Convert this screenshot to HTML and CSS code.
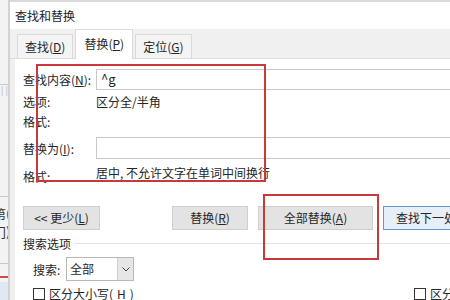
FILE: index.html
```html
<!DOCTYPE html>
<html lang="zh-CN">
<head>
  <meta charset="UTF-8" />
  <title>查找和替换</title>
  <link rel="stylesheet" href="styles.css">
</head>
<body>
  <div class="screen">
    <div class="backdrop">
      <div class="bd-rule bd-rule-top"></div>
      <div class="bd-ticks">| |</div>
      <div class="bd-rule bd-rule-mid"></div>
      <div class="bd-text bd-text-first">第(</div>
      <div class="bd-text">门)</div>
      <div class="bd-rule bd-rule-low"></div>
      <div class="bd-red"></div>
      <div class="bd-blue"></div>
    </div>

    <div class="dialog">
      <div class="titlebar">查找和替换</div>

      <div class="tabs">
        <div class="tab">查找(<u>D</u>)</div>
        <div class="tab active">替换(<u>P</u>)</div>
        <div class="tab">定位(<u>G</u>)</div>
      </div>

      <div class="panel">
        <div class="field-row find-row">
          <span class="label">查找内容(<u>N</u>):</span>
          <div class="input">^g</div>
        </div>
        <div class="info-row options-row">
          <span class="label">选项:</span>
          <span class="value">区分全/半角</span>
        </div>
        <div class="info-row">
          <span class="label">格式:</span>
        </div>
        <div class="field-row replace-row">
          <span class="label">替换为(<u>I</u>):</span>
          <div class="input"></div>
        </div>
        <div class="info-row format-row">
          <span class="label">格式:</span>
          <span class="value">居中, 不允许文字在单词中间换行</span>
        </div>

        <div class="buttons">
          <div class="btn less">&lt;&lt; 更少(<u>L</u>)</div>
          <div class="btn replace">替换(<u>R</u>)</div>
          <div class="btn replace-all">全部替换(<u>A</u>)</div>
          <div class="btn find-next">查找下一处(<u>F</u>)</div>
        </div>

        <div class="group-title">
          <span>搜索选项</span>
          <div class="group-line"></div>
        </div>

        <div class="search-row">
          <span class="search-label">搜索:</span>
          <div class="select">
            <span class="select-value">全部</span>
            <span class="select-arrow">
              <svg width="8" height="5" viewBox="0 0 8 5"><path d="M0.5 0.5 L4 4 L7.5 0.5" fill="none" stroke="#444" stroke-width="1"/></svg>
            </span>
          </div>
        </div>

        <div class="checks">
          <div class="check"><span class="box"></span>区分大小写(<u>H</u>)</div>
          <div class="check right"><span class="box"></span>区分前缀(<u>X</u>)</div>
        </div>

        <div class="mark mark-fields"></div>
        <div class="mark mark-all"></div>
      </div>
    </div>
  </div>
</body>
</html>
```

FILE: styles.css
```css
* {
  box-sizing: border-box;
}

body {
  margin: 0;
  background: #fff;
  font-family: "Noto Sans CJK SC", "Noto Sans", sans-serif;
  font-size: 12px;
  color: #262626;
}

u {
  text-decoration: underline;
  text-underline-offset: 1px;
}

.screen {
  display: flex;
  width: 450px;
  height: 300px;
  overflow: hidden;
}

/* window behind the dialog */
.backdrop {
  width: 10px;
  flex-shrink: 0;
  background: #f3f3f3;
  border-right: 2px solid #d2d2d2;
  display: flex;
  flex-direction: column;
  overflow: hidden;
}

.bd-rule {
  height: 1px;
  background: #c9c9c9;
}

.bd-rule-top {
  margin-top: 84px;
}

.bd-ticks {
  font-size: 9px;
  color: #b5b5b5;
  line-height: 12px;
  margin-left: 1px;
}

.bd-rule-mid {
  margin-top: 99px;
}

.bd-text {
  line-height: 18px;
  margin-left: -7px;
  font-size: 13px;
  color: #333;
  white-space: nowrap;
}

.bd-text-first {
  margin-top: 8px;
}

.bd-rule-low {
  margin-top: 22px;
}

.bd-red {
  height: 2px;
  margin-top: 12px;
  background: #d04a4a;
}

.bd-blue {
  flex: 1;
  margin-top: 4px;
  background: #dfe8f3;
}

.dialog {
  flex: 1;
  display: flex;
  flex-direction: column;
  background: #f0f0f0;
  min-width: 0;
}

.titlebar {
  height: 30px;
  background: #fff;
  border-top: 2px solid #d9d9d9;
  padding-left: 5px;
  line-height: 27px;
  font-size: 12px;
  color: #222;
}

.tabs {
  height: 31px;
  display: flex;
  align-items: flex-end;
  padding-left: 7px;
  gap: 2px;
  border-bottom: 1px solid #dadada;
  position: relative;
  z-index: 1;
}

.tab {
  height: 24px;
  padding: 0 7px;
  line-height: 23px;
  background: #f4f4f4;
  border: 1px solid #dadada;
  border-bottom: none;
  white-space: nowrap;
}

.tab.active {
  height: 30px;
  margin-bottom: -1px;
  line-height: 28px;
  background: #fff;
  padding: 0 8px;
}

.panel {
  flex: 1;
  margin-left: 5px;
  background: #fff;
  padding-left: 8px;
  position: relative;
  width: 460px;
}

.field-row {
  display: flex;
  align-items: center;
}

.label {
  width: 73px;
  flex-shrink: 0;
  white-space: nowrap;
}

.input {
  width: 370px;
  border: 1px solid #c9c9c9;
  padding-left: 4px;
  font-size: 13px;
  background: #fff;
}

.find-row {
  margin-top: 10px;
}

.find-row .input {
  height: 21px;
  line-height: 18px;
}

.info-row {
  display: flex;
  height: 20px;
  line-height: 20px;
  white-space: nowrap;
}

.options-row {
  margin-top: 2px;
}

.replace-row {
  margin-top: 5px;
}

.replace-row .input {
  height: 22px;
}

.format-row {
  margin-top: 4px;
}

.format-row .label {
  padding-top: 4px;
}

.buttons {
  display: flex;
  margin-top: 23px;
  gap: 10px;
}

.btn {
  height: 24px;
  line-height: 22px;
  text-align: center;
  background: #e3e3e3;
  border: 1px solid #cfcfcf;
  white-space: nowrap;
  flex-shrink: 0;
}

.btn.less {
  width: 77px;
}

.btn.replace {
  width: 76px;
  margin-left: 62px;
}

.btn.replace-all {
  width: 115px;
}

.btn.find-next {
  width: 92px;
  background: #e6eef7;
  border: 1px solid #5d9ad3;
  text-align: left;
  padding-left: 12px;
}

.group-title {
  display: flex;
  align-items: center;
  height: 18px;
  margin-top: 4px;
  gap: 4px;
  white-space: nowrap;
}

.group-line {
  flex: 1;
  height: 1px;
  background: #e4e4e4;
}

.search-row {
  display: flex;
  align-items: center;
  margin-top: 5px;
  padding-left: 10px;
}

.search-label {
  width: 33px;
}

.select {
  width: 68px;
  height: 24px;
  display: flex;
  border: 1px solid #b8b8b8;
  background: #fff;
}

.select-value {
  flex: 1;
  line-height: 22px;
  padding-left: 3px;
}

.select-arrow {
  width: 16px;
  background: #e6e6e6;
  border-left: 1px solid #cfcfcf;
  display: flex;
  align-items: center;
  justify-content: center;
}

.checks {
  display: flex;
  margin-top: 7px;
  padding-left: 10px;
}

.check {
  display: flex;
  align-items: center;
  gap: 4px;
  white-space: nowrap;
  line-height: 12px;
}

.check.right {
  margin-left: 280px;
}

.box {
  width: 12px;
  height: 12px;
  border: 1px solid #333;
  background: #fff;
}

/* red annotation boxes drawn over the screenshot */
.mark {
  position: absolute;
  border: 2px solid #c9383a;
}

.mark-fields {
  left: 21px;
  top: 5px;
  width: 230px;
  height: 118px;
}

.mark-all {
  left: 248px;
  top: 135px;
  width: 116px;
  height: 66px;
}
```
